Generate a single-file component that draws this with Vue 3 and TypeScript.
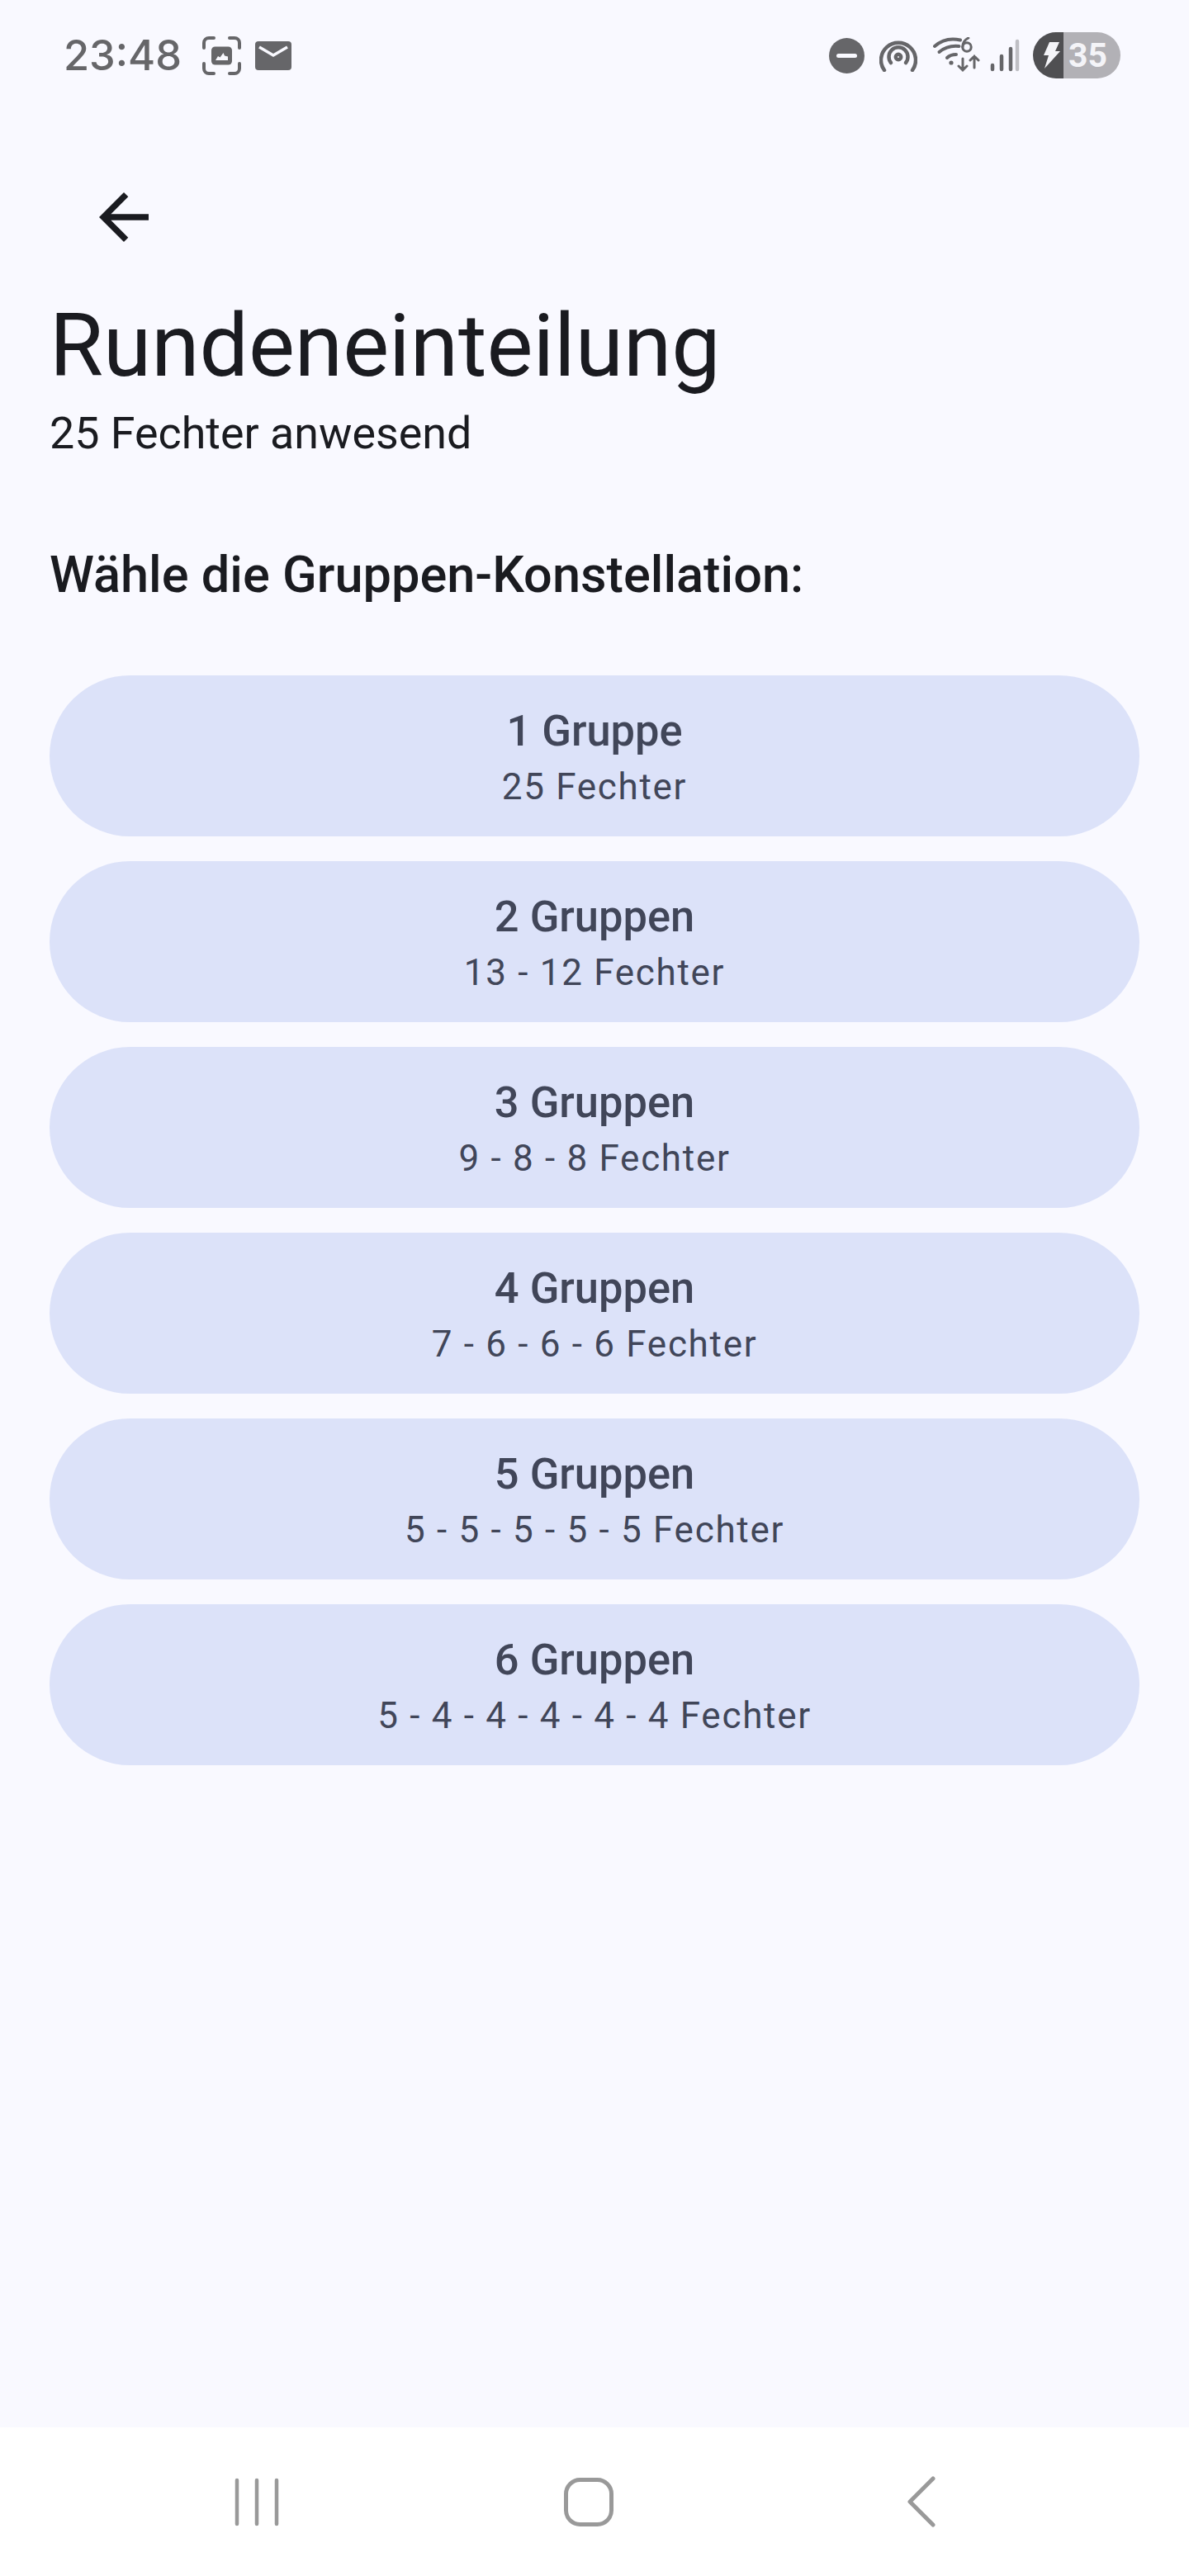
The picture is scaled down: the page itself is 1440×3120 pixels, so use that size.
<template>
  <div class="phone">
    <header class="status">
      <div class="status__left">
        <span class="status__time">23:48</span>
        <svg class="ic-shot" width="47" height="47" viewBox="0 0 47 47" fill="none">
          <path d="M2 14V8a6 6 0 0 1 6-6h6M33 2h6a6 6 0 0 1 6 6v6M45 33v6a6 6 0 0 1-6 6h-6M14 45H8a6 6 0 0 1-6-6v-6" stroke="#666669" stroke-width="4" stroke-linecap="round"/>
          <rect x="11" y="12.500" width="25" height="22" rx="4.500" fill="#666669"/>
          <path d="M16 29l3-5 2.500 1.500 4-5.500 1.500 3.500 4 1v4.500z" fill="#f9f9ff"/>
        </svg>
        <svg class="ic-mail" width="44" height="35" viewBox="0 0 44 35">
          <rect width="44" height="35" rx="4" fill="#666669"/>
          <path d="M5 7l17 10L39 7" fill="none" stroke="#f9f9ff" stroke-width="3.500"/>
        </svg>
      </div>
      <div class="status__right">
        <svg width="43" height="43" viewBox="0 0 43 43">
          <circle cx="21.500" cy="21.500" r="21.500" fill="#666669"/>
          <rect x="9" y="19" width="25" height="5" rx="2.500" fill="#f9f9ff"/>
        </svg>
        <svg class="ic-hot" width="46" height="40" viewBox="0 0 46 40" fill="none" stroke="#666669" stroke-width="4.500" stroke-linecap="round">
          <path d="M6 38A21 21 0 1 1 40 38"/>
          <path d="M14 29a11.500 11.500 0 1 1 18 0"/>
          <circle cx="23" cy="22" r="3.200"/>
        </svg>
        <svg class="ic-wifi" width="57" height="44" viewBox="0 0 57 44" fill="none" stroke="#666669" stroke-linecap="round">
          <path d="M2 11C11 3 22 1 33 3.500" stroke-width="4"/>
          <path d="M7.500 18c6-5 15-8 24-7" stroke-width="4"/>
          <path d="M17 25c3-3 7-4 11-4" stroke-width="4"/>
          <circle cx="22" cy="31" r="2.600" fill="#666669" stroke="none"/>
          <circle cx="41" cy="12" r="5.200" stroke-width="3"/>
          <path d="M35.800 12c0-5 3-9 7-11" stroke-width="3"/>
          <path d="M36 26v14M31 35l5 5 5-5M50 37V23M45 28l5-5 5 5" stroke-width="3"/>
        </svg>
        <svg class="ic-signal" width="36" height="40" viewBox="0 0 36 40" stroke-linecap="round" stroke-width="4.500" fill="none">
          <path d="M3 37v-5M14 37V21M25 37V12" stroke="#666669"/>
          <path d="M33 37V3" stroke="#bfbfc4"/>
        </svg>
        <div class="battery">
          <span class="battery__bolt">
            <svg width="22" height="32" viewBox="0 0 22 32"><path d="M9 0h12l-5 11h6L3 32l5-16H2z" fill="#f4f4f8"/></svg>
          </span>
          <span class="battery__level">{{ batteryLevel }}</span>
        </div>
      </div>
    </header>

    <main class="content">
      <button class="back" aria-label="Zurück">
        <svg width="90" height="90" viewBox="0 0 24 24"><path d="M20 11H7.830l5.590-5.590L12 4l-8 8 8 8 1.410-1.410L7.830 13H20v-2z" fill="#1a1b20"/></svg>
      </button>
      <h1 class="title">Rundeneinteilung</h1>
      <p class="subtitle">{{ fencers }} Fechter anwesend</p>
      <h2 class="prompt">Wähle die Gruppen-Konstellation:</h2>

      <div class="options">
        <button v-for="o in options" :key="o.count" class="option">
          <span class="option__name">{{ o.name }}</span>
          <span class="option__split">{{ o.split }}</span>
        </button>
      </div>
    </main>

    <nav class="nav">
      <svg width="60" height="60" viewBox="0 0 60 60" fill="none" stroke="#999" stroke-width="4.500" stroke-linecap="round">
        <path d="M6 4v53M30 4v53M54 4v53"/>
      </svg>
      <svg class="nav__home" width="60" height="60" viewBox="0 0 60 60" fill="none">
        <rect x="2.500" y="3.500" width="55" height="54" rx="17" stroke="#999" stroke-width="5"/>
      </svg>
      <svg class="nav__back" width="36" height="62" viewBox="0 0 36 62" fill="none" stroke="#999" stroke-width="5" stroke-linecap="round" stroke-linejoin="round">
        <path d="M32 3L4 31l28 28"/>
      </svg>
    </nav>
  </div>
</template>

<script setup lang="ts">
const fencers = 25
const batteryLevel = 35

function splitLabel(count: number) {
  const base = Math.floor(fencers / count)
  const rest = fencers % count
  const sizes = Array.from({ length: count }, (_, i) => (i < rest ? base + 1 : base))
  return `${sizes.join(' - ')} Fechter`
}

const options = [1, 2, 3, 4, 5, 6].map(count => ({
  count,
  name: `${count} ${count === 1 ? 'Gruppe' : 'Gruppen'}`,
  split: splitLabel(count),
}))
</script>

<style scoped>
.phone {
  width: 1440px; height: 3120px;
  display: flex; flex-direction: column;
  background: #f9f9ff; color: #1a1b20;
  font-family: Roboto, "Liberation Sans", sans-serif;
  overflow: hidden;
}

.status {
  height: 134px; flex: none;
  display: flex; align-items: center; justify-content: space-between;
  padding: 0 83px 0 77px;
}
.status__left { display: flex; align-items: center; }
.status__time {
  font-family: Inter, sans-serif; font-weight: 500; font-size: 50.500px; line-height: 1;
  color: #666669; margin-right: 25px;
}
.ic-mail { margin-left: 17px; }
.status__right { display: flex; align-items: center; }
.ic-hot { margin-left: 18px; }
.ic-wifi { margin-left: 19px; }
.ic-signal { margin-left: 12px; }

.battery {
  display: flex; margin-left: 16px;
  width: 106px; height: 56px; border-radius: 28px; overflow: hidden;
}
.battery__bolt {
  width: 37px; background: #4f4f52;
  display: flex; align-items: center; justify-content: flex-end; padding-right: 4px; box-sizing: border-box;
}
.battery__level {
  flex: 1; background: #b2b1b6; color: #f4f4f8;
  font-weight: 700; font-size: 41px; line-height: 56px; padding-left: 6px;
}

.content { flex: 1; padding: 0 60px; }

.back {
  display: block; width: 90px; height: 90px; padding: 0; margin: 84px 0 0 45px;
  border: 0; background: none;
}
.title {
  margin: 45px 0 0 0;
  font-size: 105.500px; font-weight: 400; line-height: 132px;
}
.subtitle {
  margin: 4px 0 0;
  font-size: 53.800px; line-height: 72px;
}
.prompt {
  margin: 97px 0 0;
  font-size: 61.300px; font-weight: 500; line-height: 76px;
}

.options { display: flex; flex-direction: column; gap: 30px; margin-top: 84px; }
.option {
  height: 195px; border: 0; border-radius: 98px; padding: 0;
  background: #dce2f9; color: #414659;
  display: flex; flex-direction: column; align-items: center; justify-content: center;
  font-family: inherit;
}
.option__name { font-size: 52.400px; font-weight: 500; line-height: 75px; }
.option__split { font-size: 44px; letter-spacing: 1.700px; line-height: 61px; }

.nav {
  height: 180px; flex: none; background: #fff;
  display: flex; align-items: center;
  padding-left: 281px;
}
.nav__home { margin-left: 342px; }
.nav__back { margin-left: 355px; }
</style>

<style>
html, body { margin: 0; background: #f9f9ff; }
</style>
